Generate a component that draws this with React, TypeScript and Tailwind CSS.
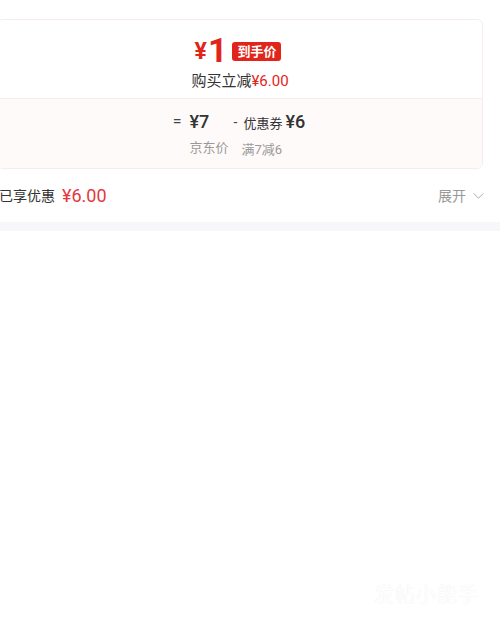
import React from "react";

export default function App() {
  return (
    <div
      className="relative w-[500px] h-[625px] bg-white overflow-hidden"
      style={{ fontFamily: '"Roboto", "Noto Sans CJK SC", sans-serif' }}
    >
      <div className="pt-[19px]">
        <div className="ml-[-3px] w-[486px] rounded-[6px] border border-[#f6ecec] overflow-hidden">
          <div className="h-[78px] bg-white flex flex-col items-center pt-[13px]">
            <div className="flex items-center h-[34px] -ml-[4px]">
              <span className="text-[23px] leading-[34px] font-bold text-[#e1251b] mt-[4px]">¥</span>
              <span className="text-[34px] leading-[34px] font-bold text-[#e1251b] ml-[1px]">1</span>
              <span className="ml-[5px] mt-[2px] h-[19px] px-[5px] rounded-[3px] bg-[#e1251b] text-white text-[13px] leading-[19px] font-bold">
                到手价
              </span>
            </div>
            <div className="mt-[4px] text-[15px] leading-[20px] text-[#333]">
              购买立减<span className="text-[#e1251b]">¥6.00</span>
            </div>
          </div>
          <div className="h-[70px] bg-[#fffafa] border-t border-[#f8eeee] flex justify-center pt-[12px] pr-[2px]">
            <div className="flex items-start">
              <span className="text-[16px] leading-[22px] text-[#444] mr-[8px]">=</span>
              <div className="flex flex-col">
                <span className="text-[18px] leading-[22px] font-medium text-[#333]">¥7</span>
                <span className="mt-[6px] text-[13px] leading-[17px] text-[#999]">京东价</span>
              </div>
            </div>
            <div className="flex items-start ml-[5px]">
              <span className="text-[14px] leading-[22px] text-[#444] mr-[6px]">-</span>
              <div className="flex flex-col">
                <span className="leading-[22px] text-[#333] whitespace-nowrap">
                  <span className="text-[13px]">优惠券</span>
                  <span className="text-[18px] font-medium ml-[3px]">¥6</span>
                </span>
                <span className="mt-[6px] text-[13px] leading-[17px] text-[#999] -ml-[2px]">满7减6</span>
              </div>
            </div>
          </div>
        </div>
        <div className="h-[53px] flex items-center justify-between pr-[15px] ml-[-1px]">
          <div className="flex items-center">
            <span className="text-[14px] leading-[20px] text-[#333]">已享优惠</span>
            <span className="ml-[7px] text-[18px] leading-[20px] text-[#e4393c]">¥6.00</span>
          </div>
          <div className="flex items-center text-[#999]">
            <span className="text-[14px] leading-[20px]">展开</span>
            <svg width="13" height="13" viewBox="0 0 24 24" className="ml-[6px]" fill="none" stroke="#aaa" strokeWidth="1.8">
              <path d="M3 8l9 9 9-9" />
            </svg>
          </div>
        </div>
        <div className="h-[9px] bg-[#f7f7fa]" />
      </div>
      <div
        className="absolute left-[374px] top-[582px] text-[20px] leading-[26px] text-white tracking-[1px]"
        style={{ textShadow: "0 0 1px rgba(0,0,0,0.1)" }}
      >
        发帖小能手
      </div>
    </div>
  );
}
